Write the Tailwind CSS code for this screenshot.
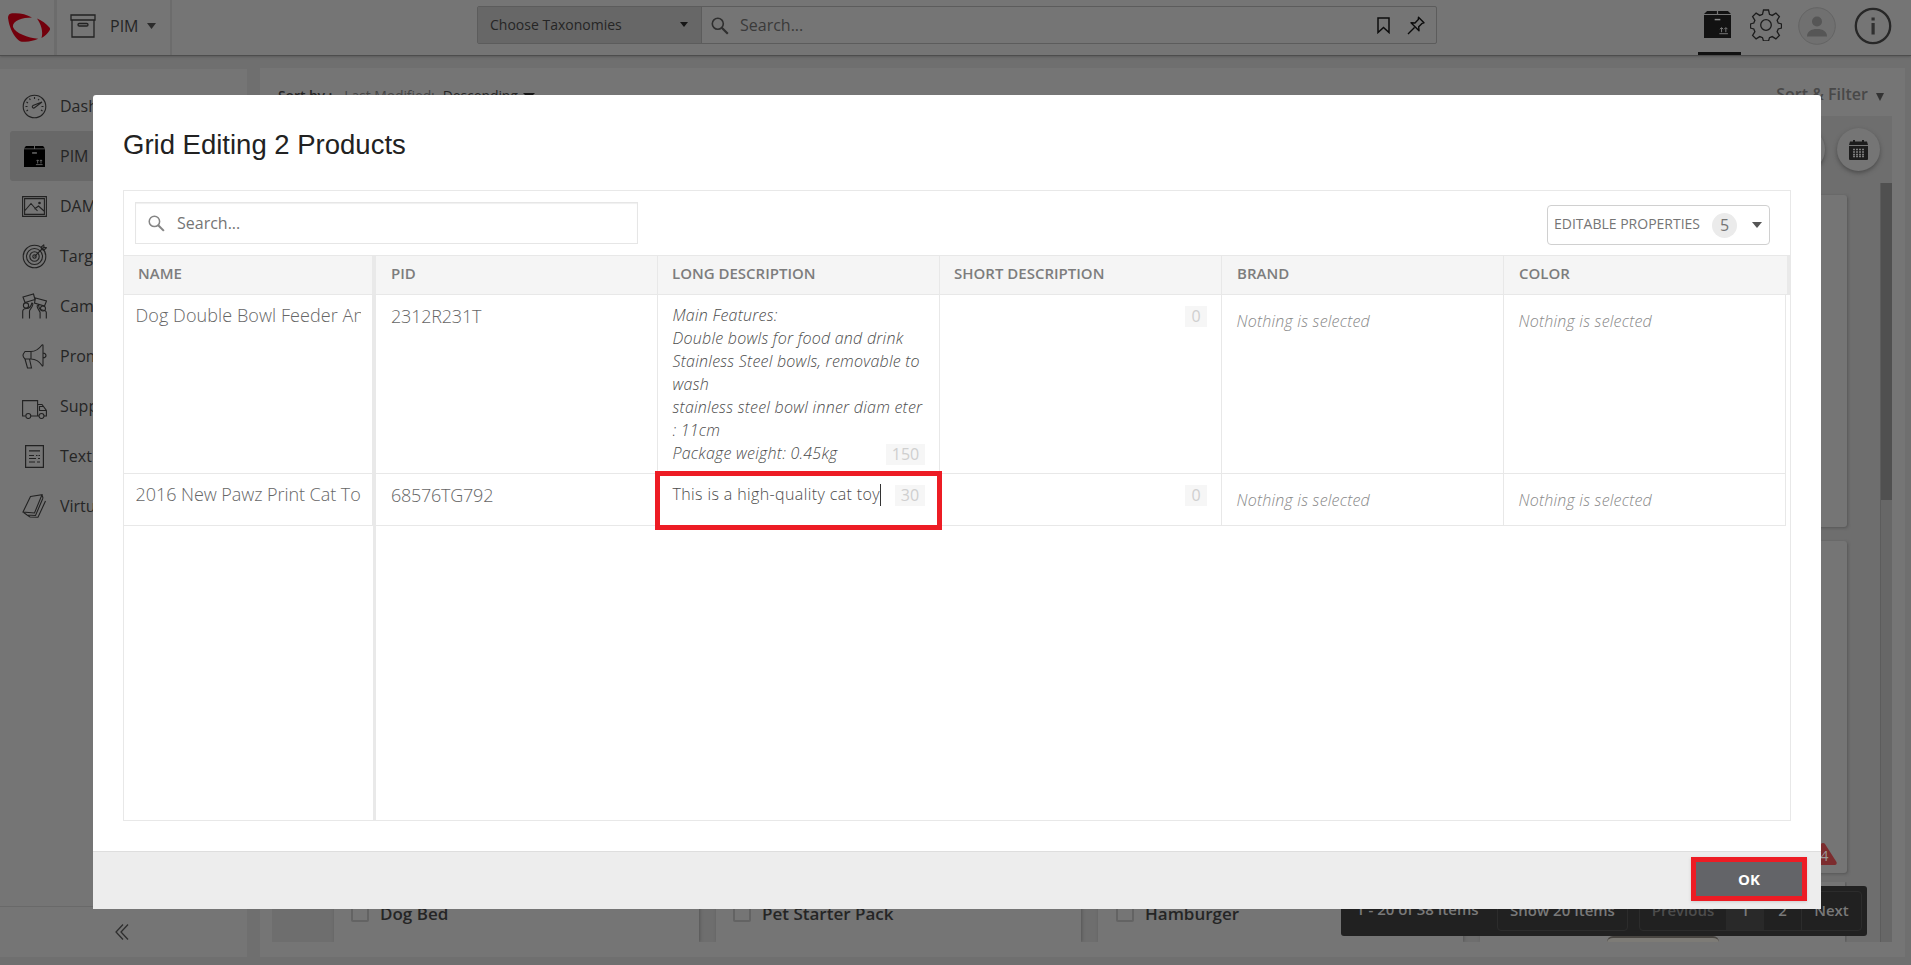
<!DOCTYPE html>
<html lang="en">
<head>
<meta charset="utf-8">
<title>Grid Editing</title>
<script src="https://cdn.jsdelivr.net/npm/@tailwindcss/browser@4"></script>
</head>
<body class="relative h-[965px] w-[1911px] overflow-hidden bg-[#6f6f6f] font-['Open_Sans',sans-serif] text-base text-[#252525]">

<!-- Application behind the dialog -->
<div class="flex h-full flex-col">
  <header class="relative z-10 flex h-[56px] shrink-0 items-center border-b border-[#4d4d4d] bg-[#757575] shadow-[0_1px_2px_#5c5c5c]">
    <div class="flex h-full w-[57px] items-center border-r-3 border-[#6c6c6c] pl-2">
      <svg class="h-[29px] w-[43px]" viewBox="0 0 43 29" fill="#73000c"><path d="M24 4.500C18 1 11-.4 4 .3 1 .6-.5 3 .2 6c1 7 4 15 9 20 2 2.300 4 3 8 2.800 5-.2 9-1.200 13-3C20 25 7 20 5 14 4 8 14 4.500 24 4.500z"/><path d="M29 5.500c5 2 9 5 12.500 9 .7 1 .7 2 0 3C39.500 21 37 23 33.500 25c2-6-.5-14-4.500-19.500z"/></svg>
    </div>
    <div class="flex h-full w-[115px] items-center border-r-2 border-[#6c6c6c] pb-1 pl-[13px]">
      <svg class="h-6 w-[26px]" viewBox="0 0 26 24" fill="none" stroke="#222" stroke-width="1.300"><path d="M1 1h24v5H1zM2 6v17h22V6"/><rect x="8" y="9.500" width="10" height="2.500" rx="1.200"/></svg>
      <span class="ml-[14px]">PIM</span>
      <svg class="ml-[9px] h-[6px] w-[9px]" viewBox="0 0 9 6" fill="#2b2b2b"><path d="M0 0h9L4.500 6z"/></svg>
    </div>
    <div class="mb-[6px] ml-[305px] flex h-[38px] w-[960px] rounded-[2px] border border-[#5c5c5c]">
      <div class="flex w-[224px] items-center justify-between border-r border-[#5c5c5c] bg-[#676767] pr-[13px] pl-3 text-[14px] font-medium">
        <span class="whitespace-nowrap">Choose Taxonomies</span>
        <svg class="h-[5px] w-2" viewBox="0 0 8 5" fill="#151515"><path d="M0 0h8L4 5z"/></svg>
      </div>
      <svg class="mt-[10px] ml-[9px] h-[18px] w-[18px]" viewBox="0 0 18 18" fill="none" stroke="#2f2f2f"><circle cx="6.800" cy="6.800" r="5.500" stroke-width="1.600"/><path d="M10.800 10.800l6 6" stroke-width="2.200"/></svg>
      <span class="mt-[6px] ml-[11px] text-[#3a3a3a]">Search...</span>
      <svg class="mt-[10px] ml-auto h-[17px] w-[13px]" viewBox="0 0 13 17" fill="none" stroke="#0c0c0c" stroke-width="1.500"><path d="M1 1h11v14.500L6.500 10.500 1 15.500z"/></svg>
      <svg class="mt-[9px] mr-[11px] ml-[17px] h-[19px] w-[18px]" viewBox="0 0 18 19" fill="none" stroke="#0c0c0c" stroke-width="1.400" stroke-linejoin="round"><path d="M11.500 1.200l5.500 5.600-2 .6-3.300 3.400.3 4-8-8 4 .2 3.300-3.400zM7.500 11.500L1 18"/></svg>
    </div>
    <div class="ml-[261px] flex h-full w-[43px] flex-col items-center justify-between pt-[11px]">
      <svg class="mr-1 h-[27px] w-[27px]" viewBox="0 0 22 22"><path d="M2.500 0h8v2.500H0zM11.500 0h8L22 2.500H11.500zM0 3.300h22V22H0z" fill="#121212"/><path d="M8.700 7h4.600" stroke="#888" stroke-width="1.200"/><path d="M12.500 18.500h7M14.300 17.300v-3.500m-1.300 1l1.300-1.300 1.300 1.300M17.800 17.300v-3.500m-1.300 1l1.300-1.300 1.300 1.300" stroke="#777" stroke-width=".8" fill="none"/></svg>
      <div class="h-[3px] w-full bg-[#111]"></div>
    </div>
    <svg class="mb-[5px] ml-[9px] h-8 w-8" viewBox="-16 -16 32 32" fill="none" stroke="#1d1d1d" stroke-width="1.300"><circle r="5.300"/><path d="M-2.500-15h5l1 4.300 2.700 1.100 3.700-2.300 3.500 3.500-2.300 3.700 1.100 2.700 3.300 1v4l-3.300 1-1.100 2.700 2.300 3.700-3.500 3.500-3.700-2.300-2.700 1.100-1 3.300h-5l-1-3.300-2.700-1.100-3.700 2.300-3.500-3.500 2.300-3.700-1.100-2.700-3.300-1v-4l3.300-1 1.100-2.700-2.300-3.700 3.500-3.500 3.700 2.300 2.700-1.100z"/></svg>
    <svg class="mb-[3px] ml-4 h-[38px] w-[38px]" viewBox="0 0 38 38"><circle cx="19" cy="19" r="18.300" fill="#707070" stroke="#646464"/><circle cx="19" cy="14.500" r="5" fill="#565656"/><path d="M9 29.500c0-5 4-7.500 10-7.500s10 2.500 10 7.500z" fill="#565656"/></svg>
    <svg class="mb-[3px] ml-[18px] h-[38px] w-[38px]" viewBox="0 0 38 38"><circle cx="19" cy="19" r="17.200" fill="none" stroke="#272727" stroke-width="2.300"/><path d="M17.500 10.500h3.200v3h-3.200zM17.500 16h3.200v11.500h-3.200z" fill="#303030"/></svg>
  </header>

  <div class="flex flex-1 gap-[13px] pt-3 pb-2">
    <nav class="mt-[1px] flex w-[247px] flex-col bg-[#757575] pt-3">
      <div class="flex h-[50px] items-center gap-[13px] pl-[22px]">
        <svg class="h-[25px] w-[25px]" viewBox="0 0 25 25" fill="none" stroke="#222" stroke-width="1.100"><circle cx="12.500" cy="12.500" r="11.300"/><path d="M12.500 3v2M7.500 4.500l.8 1.500M4.500 8l1.500 1M3.500 12.500h2M4.500 17l1.500-1M17 5l-.8 1.300M21.500 12.500h-2M20.500 17l-1.500-1M20 8L11 11.500c-1.500 1-.5 3 1.200 2.500z"/></svg><span>Dashboard</span></div>
      <div class="ml-[10px] flex h-[50px] items-center gap-[15px] rounded-l-[3px] bg-[#686868] pl-[14px]">
        <svg class="h-[21px] w-[21px]" viewBox="0 0 22 22"><path d="M2 0h8.500v2.500H0zM11.500 0H20l2 2.500H11.500zM0 3.300h22V22H0z"/><path d="M8.500 7.300h5" stroke="#888" stroke-width="1.200"/><path d="M12.500 19.500h7M14.300 18.300v-3.500m-1.300 1l1.300-1.300 1.300 1.300M17.800 18.300v-3.500m-1.300 1l1.300-1.300 1.300 1.300" stroke="#888" stroke-width=".7" fill="none"/></svg><span>PIM</span></div>
      <div class="flex h-[50px] items-center gap-[13px] pl-[22px]">
        <svg class="h-[21px] w-[25px]" viewBox="0 0 25 21" fill="none" stroke="#222" stroke-width="1.100"><path d="M.6.6h23.800v19.800H.6zM2.600 2.600h19.800v15.800H2.600zM3 14.500l6-7 6.500 7.500M12.500 13l4-3 5.500 5"/><circle cx="17.500" cy="7" r="1.300" fill="#222" stroke="none"/></svg><span>DAM</span></div>
      <div class="flex h-[50px] items-center gap-[13px] pl-[22px]">
        <svg class="h-[25px] w-[25px]" viewBox="0 0 25 25" fill="none" stroke="#222" stroke-width="1.100"><circle cx="12.500" cy="12.500" r="11.300"/><circle cx="12.500" cy="12.500" r="8"/><circle cx="12.500" cy="12.500" r="4.700"/><circle cx="12.500" cy="12.500" r="1.700"/><path d="M12.500 12.500l9-9M19.500 5.500l-.3-2.500 2.500-2 .4 2.400 2.400.4-2.300 2.200z"/></svg><span>Targets</span></div>
      <div class="flex h-[50px] items-center gap-[13px] pl-[22px]">
        <svg class="h-[26px] w-[25px]" viewBox="0 0 25 26" fill="none" stroke="#222" stroke-width="1.100"><path d="M1 4l10.500-3 1.500 5.500L3 9.500zM13.500 5l11 3-2 5-10-3zM.7 25.500v-7q0-3 4-3c2 0 4-1 5.200-5.500q1.200 0 .8 2c-.5 3-3 4-3.200 6v7.500M24.300 25.500v-6q0-2-4-2.500c-2 0-3.500-2-3.700-5l-1.500 1c0 3 3 5 3 6.500v6"/><circle cx="4" cy="12.500" r="2.600"/><circle cx="21" cy="15.500" r="2.500"/></svg><span>Campaigns</span></div>
      <div class="flex h-[50px] items-center gap-[13px] pl-[22px]">
        <svg class="h-[25px] w-[25px]" viewBox="0 0 25 25" fill="none" stroke="#222" stroke-width="1.100"><path d="M3 7.500h6c5 0 8-2.500 11-6.500.8-.5 1 0 1 1v19c0 1-.5 1.500-1 .5-3-4.500-6-6.500-11-6.500H3q-2-2-2-3.500t2-4zM9 7.500V15M21 9c4 .5 4 4.500 0 5M3 15l2.500 9h4L7.500 15"/></svg><span>Promotions</span></div>
      <div class="flex h-[50px] items-center gap-[13px] pl-[22px]">
        <svg class="mt-[6px] h-[19px] w-[25px]" viewBox="0 0 25 19" fill="none" stroke="#222" stroke-width="1.100"><path d="M3.500 16H.6V.6h15V16H9M15.600 4.500H20l4.400 6V16H22M15.600 16H17M24 10.500h-6.500v-4h4"/><circle cx="6.300" cy="16" r="2.500"/><circle cx="19.500" cy="16" r="2.500"/></svg><span>Suppliers</span></div>
      <div class="flex h-[50px] items-center gap-[16px] pl-[25px]">
        <svg class="h-[23px] w-[19px]" viewBox="0 0 19 23" fill="none" stroke="#222" stroke-width="1.200"><path d="M.6.6h17.800v21.800H.6zM4 5.800h11M4 10.500h5M11 10.500h1.500M13.500 10.500H15M4 13.500h7M13 13.500h2M4 17h6M12 17h3"/></svg><span class="whitespace-nowrap">Text</span></div>
      <div class="flex h-[50px] items-center gap-[13px] pl-[22px]">
        <svg class="h-[24px] w-[25px]" viewBox="0 0 25 24" fill="none" stroke="#222" stroke-width="1.100"><path d="M8.500 2.500L20 .8 12.500 19 1 18zM1 18l4 3 8.500.5L21 4M5 21l3 2 8 .3L23.500 7M20 .8L21 4"/></svg><span>Virtual</span></div>
      <div class="mt-auto flex h-[51px] items-center justify-center border-t border-[#696969] pr-1">
        <svg class="h-4 w-[14px]" viewBox="0 0 14 16" fill="none" stroke="#2e2e2e" stroke-width="1.300"><path d="M8 .5L1 8l7 7.500M13 .5L6 8l7 7.500"/></svg>
      </div>
    </nav>

    <main class="flex h-[889px] w-[1645px] flex-col bg-[#757575] pr-[13px] pl-3">
      <div class="flex h-12 shrink-0 justify-between pt-[14px] pr-[8px]">
        <div class="flex gap-3 pl-[6px] text-sm leading-[27px] tracking-[-0.1px]"><b class="font-semibold">Sort by :</b><span class="text-[#454545]">Last Modified:</span><span class="-ml-1">Descending</span><svg class="mt-[11px] -ml-[7px] h-[6px] w-3" viewBox="0 0 12 6"><path d="M0 0h12L6 6z" fill="#151515"/></svg></div>
        <div class="flex gap-2 text-base leading-[25px] font-semibold text-[#484848]"><span>Sort &amp; Filter</span><svg class="mt-[11px] h-2 w-2" viewBox="0 0 8 8" fill="#333"><path d="M0 0h8L4 8z"/></svg></div>
      </div>
      <div class="relative flex h-[826px] justify-end bg-[#6e6e6e]">
        <!-- product tiles -->
        <div class="mr-[33px] flex flex-col gap-[14px] pt-[79px]">
          <div class="h-[332px] w-[365px] rounded-[3px] bg-[#757575] shadow-[1px_1px_3px_#555]"></div>
          <div class="relative h-[332px] w-[365px] rounded-[3px] bg-[#757575] shadow-[1px_1px_3px_#555]">
            <svg class="absolute right-[10px] bottom-2 h-[22px] w-[28px]" viewBox="0 0 28 22"><path d="M14 0q1.500 0 2 1l11.500 18q.8 3-1.500 3H2q-2.300 0-1.500-3L12 1q.5-1 2-1z" fill="#7c2c2e"/><text x="15.500" y="17.500" text-anchor="middle" font-size="14" fill="#999">4</text></svg>
          </div>
        </div>
        <div class="mt-[67px] w-3 border-l border-[#5c5c5c] bg-[#676767]"><div class="h-[317px] bg-[#505050]"></div></div>

        <div class="absolute top-3 right-[12px] flex gap-3">
          <div class="h-[43px] w-[43px] rounded-full bg-[#757575] shadow-[0_2px_4px_#4c4c4c]"></div>
          <div class="flex h-[43px] w-[43px] items-center justify-center rounded-full bg-[#757575] pr-px shadow-[0_2px_4px_#4c4c4c]">
            <svg class="h-5 w-[19px]" viewBox="0 0 19 20"><path d="M1 1.500h3V0h2v1.500h7V0h2v1.500h3L19 5H0zM0 6h19v13q0 1-1 1H1q-1 0-1-1z" fill="#1c1c1c"/><path d="M4 9.500h11M4 12h11M4 14.500h11M4 16.500h11" stroke="#7c7c7c" stroke-width="1.500" stroke-dasharray="2 1"/></svg>
          </div>
        </div>

        <div class="absolute bottom-0 left-0 flex h-[60px] w-[1575px] items-end gap-[17px] overflow-hidden pl-[62px] text-[17px] font-semibold">
          <div class="flex h-full w-[365px] shrink-0 gap-[11px] bg-[#757575] pt-[17px] pl-[17px] shadow-[1px_0_3px_#555]"><div class="mt-[5px] h-[18px] w-[18px] rounded-[2px] border-2 border-[#636363]"></div><span class="leading-[30px]">Dog Bed</span></div>
          <div class="flex h-full w-[365px] shrink-0 gap-[11px] bg-[#757575] pt-[17px] pl-[17px] shadow-[1px_0_3px_#555]"><div class="mt-[5px] h-[18px] w-[18px] rounded-[2px] border-2 border-[#636363]"></div><span class="leading-[30px]">Pet Starter Pack</span></div>
          <div class="flex h-full w-[365px] shrink-0 gap-[11px] bg-[#757575] pt-[17px] pl-[18px] shadow-[1px_0_3px_#555]"><div class="mt-[5px] h-[18px] w-[18px] rounded-[2px] border-2 border-[#636363]"></div><span class="leading-[30px]">Hamburger</span></div>
          <div class="flex h-full w-[365px] shrink-0 items-end justify-center bg-[#757575] shadow-[1px_0_3px_#555]"><div class="h-[6px] w-[112px] rounded-t-[16px] border-t-2 border-[#484541] bg-[#7d7b76]"></div></div>
        </div>
      </div>
    </main>
  </div>
</div>

<!-- Pager floating over the product list -->
<div class="absolute top-[886px] left-[1341px] flex h-[50px] w-[526px] rounded-[3px] bg-[#212121] pt-[5px] pr-[5px] text-[15px] leading-[37px] font-semibold text-[#797979]">
  <span class="w-[156px] pl-[15px]">1 - 20 of 38 Items</span>
  <span class="h-10 w-[131px] rounded-[4px] border border-[#2c2c2c] text-center">Show 20 Items</span>
  <div class="ml-[11px] flex h-10 flex-1 rounded-[4px] border border-[#2c2c2c]">
    <span class="w-[86px] text-center text-[#4c4c4c]">Previous</span><span class="w-[38px] bg-[#292929] text-center">1</span><span class="w-[38px] border-r border-[#2c2c2c] text-center">2</span><span class="flex-1 text-center">Next</span>
  </div>
</div>

<!-- Dialog -->
<section class="absolute top-[95px] left-[93px] flex h-[814px] w-[1728px] flex-col rounded-t-[3px] bg-white text-[#757575]">
  <h1 class="px-[30px] pt-8 font-['Liberation_Sans',sans-serif] text-[27.500px] leading-9 text-[#222]">Grid Editing 2 Products</h1>
  <div class="mt-[27px] ml-[30px] flex h-[631px] w-[1668px] flex-col border border-[#e8e8e8]">
    <div class="flex h-16 shrink-0 items-start justify-between pr-[20px] pl-[11px]">
      <div class="mt-[11px] flex h-[42px] w-[503px] items-center border border-[#e6e6e6] shadow-[inset_0_1px_1px_#f0f0f0]">
        <svg class="ml-3 h-[17px] w-[17px]" viewBox="0 0 18 18" fill="none" stroke="#858585"><circle cx="6.800" cy="6.800" r="5.500" stroke-width="1.600"/><path d="M10.800 10.800l6 6" stroke-width="2.200"/></svg>
        <span class="ml-3">Search...</span>
      </div>
      <div class="mt-[14px] flex h-10 w-[223px] items-center rounded-[4px] border border-[#d0d0d0] pl-[6px] text-sm font-medium">
        <span class="-mt-[2px] whitespace-nowrap">EDITABLE PROPERTIES</span>
        <span class="ml-3 flex h-[25px] w-[25px] shrink-0 items-center justify-center rounded-full bg-[#ebebeb] text-base font-normal">5</span>
        <svg class="ml-[15px] h-[6px] w-[10px]" viewBox="0 0 10 6" fill="#555"><path d="M0 0h10L5 6z"/></svg>
      </div>
    </div>
    <div class="flex h-10 shrink-0 border-y border-[#e8e8e8] bg-[#f5f5f5] text-[15px] leading-[35px] font-semibold text-[#7d7d7d]">
      <div class="w-[252px] border-r-4 border-[#e9e9e9] pl-[14px]">NAME</div>
      <div class="w-[282px] border-r border-[#e8e8e8] pl-[15px]">PID</div>
      <div class="w-[282px] border-r border-[#e8e8e8] pl-[14px]">LONG DESCRIPTION</div>
      <div class="w-[282px] border-r border-[#e8e8e8] pl-[14px]">SHORT DESCRIPTION</div>
      <div class="w-[282px] border-r border-[#e8e8e8] pl-[15px]">BRAND</div>
      <div class="flex-1 border-r-3 border-[#e9e9e9] pl-[15px]">COLOR</div>
    </div>
    <div class="flex h-[179px] shrink-0">
      <div class="w-[252px] border-r-4 border-b border-r-[#e9e9e9] border-b-[#e8e8e8] pr-[11px] pl-[11.500px] text-[18px] leading-[40px] font-light tracking-[0.08px] text-[#666]"><div class="overflow-hidden whitespace-nowrap">Dog Double Bowl Feeder And</div></div>
      <div class="w-[282px] border-r border-b border-[#e8e8e8] pl-[15px] text-[18px] leading-[42px] font-light tracking-[-0.2px] text-[#666]">2312R231T</div>
      <div class="relative w-[282px] border-r border-b border-[#e8e8e8] pt-[9px] pl-[14.500px] text-base leading-[23px] font-light tracking-[0.24px] whitespace-nowrap text-[#4c4c4c] italic">
        <p>Main Features:</p><p>Double bowls for food and drink</p><p>Stainless Steel bowls, removable to</p><p>wash</p><p>stainless steel bowl inner diam eter</p><p>: 11cm</p><p>Package weight: 0.45kg</p>
        <span class="absolute right-[14px] bottom-[8px] h-[21px] w-[39px] bg-[#f6f6f6] text-center leading-[21px] font-normal tracking-normal text-[#cfcfcf] not-italic">150</span>
      </div>
      <div class="flex w-[282px] justify-end border-r border-b border-[#e8e8e8] pt-[11px] pr-[14px]"><span class="h-[21px] w-[22px] bg-[#f6f6f6] text-center leading-[21px] text-[#cfcfcf]">0</span></div>
      <div class="w-[282px] border-r border-b border-[#e8e8e8] pl-[14.500px] leading-[53px] font-light tracking-[0.22px] text-[#888] italic">Nothing is selected</div>
      <div class="w-[282px] border-r border-b border-[#e8e8e8] pl-[14.500px] leading-[53px] font-light tracking-[0.22px] text-[#888] italic">Nothing is selected</div>
    </div>
    <div class="flex h-[52px] shrink-0">
      <div class="w-[252px] border-r-4 border-b border-r-[#e9e9e9] border-b-[#e8e8e8] pr-[11px] pl-[11.500px] text-[18px] leading-[40px] font-light tracking-[-0.06px] text-[#666]"><div class="overflow-hidden whitespace-nowrap">2016 New Pawz Print Cat To</div></div>
      <div class="w-[282px] border-r border-b border-[#e8e8e8] pl-[15px] text-[18px] leading-[42px] font-light tracking-[-0.25px] text-[#666]">68576TG792</div>
      <div class="relative flex w-[282px] border-r border-b border-[#e8e8e8] pt-[9px] pl-[14.500px] text-base leading-[23px] font-light text-[#4c4c4c]">
        <span class="tracking-[0.38px]">This is a high-quality cat toy</span><span class="mt-[1px] h-[22px] w-px bg-[#333]"></span>
        <span class="absolute top-[11px] right-[14px] h-[21px] w-[30px] bg-[#f6f6f6] text-center leading-[21px] font-normal text-[#cfcfcf]">30</span>
        <div class="absolute -top-[3px] -left-[3px] h-[59px] w-[287px] border-5 border-[#ed1c24]"></div>
      </div>
      <div class="flex w-[282px] justify-end border-r border-b border-[#e8e8e8] pt-[11px] pr-[14px]"><span class="h-[21px] w-[22px] bg-[#f6f6f6] text-center leading-[21px] text-[#cfcfcf]">0</span></div>
      <div class="w-[282px] border-r border-b border-[#e8e8e8] pl-[14.500px] leading-[53px] font-light tracking-[0.22px] text-[#888] italic">Nothing is selected</div>
      <div class="w-[282px] border-r border-b border-[#e8e8e8] pl-[14.500px] leading-[53px] font-light tracking-[0.22px] text-[#888] italic">Nothing is selected</div>
    </div>
    <div class="w-[252px] flex-1 border-r-3 border-[#e9e9e9]"></div>
  </div>
  <footer class="mt-auto flex h-[58px] justify-end border-t border-[#dedede] bg-[#ededed] pt-[5px] pr-[14px]">
    <button class="h-[44px] w-[116px] border-5 border-[#ed1c24] bg-[#636468] text-[15px] font-bold text-white shadow-[0_1px_3px_#ccc]">OK</button>
  </footer>
</section>
</body>
</html>
